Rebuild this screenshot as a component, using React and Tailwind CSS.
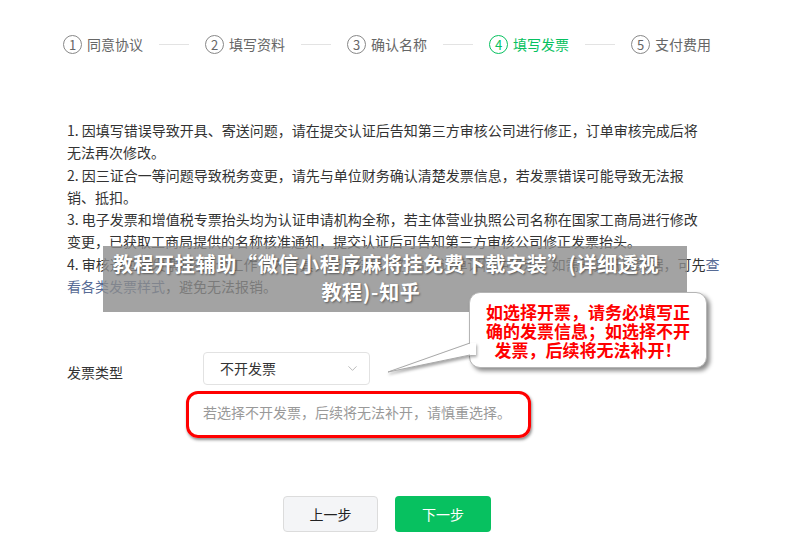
import React from "react";
import { ChevronDown } from "lucide-react";

const steps = [
  { n: 1, label: "同意协议" },
  { n: 2, label: "填写资料" },
  { n: 3, label: "确认名称" },
  { n: 4, label: "填写发票", active: true },
  { n: 5, label: "支付费用" },
];

function Steps() {
  return (
    <div className="flex h-[20px] items-center pl-[63px]">
      {steps.map((s, i) => (
        <React.Fragment key={s.n}>
          {i > 0 && <div className="mx-[16px] h-px w-[30px] bg-[#e3e3e3]" />}
          <div
            className={
              "flex items-center gap-[5px] " +
              (s.active ? "text-[#07c160]" : "text-[#666]")
            }
          >
            <div
              className={
                "flex h-[19px] w-[19px] items-center justify-center rounded-full border text-[13px] leading-none " +
                (s.active ? "border-[#07c160]" : "border-[#888]")
              }
            >
              {s.n}
            </div>
            <span className="text-[14px] leading-[20px]">{s.label}</span>
          </div>
        </React.Fragment>
      ))}
    </div>
  );
}

function Notes() {
  return (
    <div className="mt-[65px] pl-[67px] text-[14px] leading-[22.3px] text-[#333] whitespace-nowrap">
      <div>1. 因填写错误导致开具、寄送问题，请在提交认证后告知第三方审核公司进行修正，订单审核完成后将</div>
      <div>无法再次修改。</div>
      <div>2. 因三证合一等问题导致税务变更，请先与单位财务确认清楚发票信息，若发票错误可能导致无法报</div>
      <div>销、抵扣。</div>
      <div>3. 电子发票和增值税专票抬头均为认证申请机构全称，若主体营业执照公司名称在国家工商局进行修改</div>
      <div>变更，已获取工商局提供的名称核准通知，提交认证后可告知第三方审核公司修正发票抬头。</div>
      <div>
        4. 审核通过后发票将在8个工作日内开具，开票结果将在右侧订单详情中显示，如需开具纸质票据，可先
        <span className="text-[#576b95]">查</span>
      </div>
      <div>
        <span className="text-[#576b95]">看各类发票样式</span>，避免无法报销。
      </div>
    </div>
  );
}

function InvoiceForm() {
  return (
    <div className="pl-[67px]">
      <div className="mt-[55px] flex items-center">
        <div className="w-[136px] pt-[7px] text-[14px] leading-[20px] text-[#333]">发票类型</div>
        <div className="flex h-[33px] w-[167px] items-center justify-between rounded-[4px] border border-[#e2e2e2] pl-[16px] pr-[9px] text-[14px] text-[#333]">
          <span>不开发票</span>
          <ChevronDown size={15} strokeWidth={1.3} className="text-[#aaa]" />
        </div>
      </div>
      <div className="mt-[17px] pl-[136px] text-[14px] leading-[20px] text-[#999]">
        若选择不开发票，后续将无法补开，请慎重选择。
      </div>
      <div className="mt-[74px] flex gap-[17px] pl-[216px]">
        <button className="h-[36px] w-[95px] rounded-[4px] border border-[#dcdcdc] bg-[#f4f5f7] text-[14px] text-[#222]">
          上一步
        </button>
        <button className="h-[36px] w-[96px] rounded-[4px] bg-[#07c160] text-[14px] text-white">
          下一步
        </button>
      </div>
    </div>
  );
}

export default function App() {
  return (
    <div className="relative h-[560px] w-[793px] overflow-hidden bg-white font-['Noto_Sans_CJK_SC',sans-serif]">
      <div className="pt-[34px]">
        <Steps />
        <Notes />
        <InvoiceForm />
      </div>

      {/* title banner */}
      <div className="absolute left-[103px] top-[246px] h-[66px] w-[584px] bg-[rgba(140,140,140,0.8)] pt-[4px] text-[20px] font-bold leading-[28px] tracking-[0.7px] text-white [text-shadow:1px_1px_2px_rgba(0,0,0,0.45)]">
        <div className="whitespace-nowrap pr-[18px] text-center">教程开挂辅助“微信小程序麻将挂免费下载安装”(详细透视</div>
        <div className="whitespace-nowrap pr-[48px] text-center">教程)-知乎</div>
      </div>

      {/* red highlight around the hint */}
      <div className="absolute left-[186px] top-[391px] h-[47px] w-[345px] rounded-[12px] border-[3px] border-[#f00] shadow-[1px_2px_3px_rgba(0,0,0,0.45)]" />

      {/* callout bubble */}
      <div className="absolute left-[469px] top-[292px] flex h-[76px] w-[238px] flex-col items-center justify-center rounded-[11px] border border-[#b5b5b5] bg-white text-[17px] font-bold leading-[19px] text-[#f00] shadow-[3px_3px_4px_rgba(0,0,0,0.45)]">
        <div>如选择开票，请务必填写正</div>
        <div>确的发票信息；如选择不开</div>
        <div>发票，后续将无法补开！</div>
      </div>
      <svg
        className="absolute left-[380px] top-[335px]"
        width="96"
        height="45"
        viewBox="0 0 96 45"
        style={{ filter: "drop-shadow(1px 2px 1.5px rgba(0,0,0,0.35))" }}
      >
        <polygon points="8,37 91,8 96,8 96,20 91,20" fill="#fff" />
        <polyline points="90,8 8,37 90,20" fill="none" stroke="#a8a8a8" strokeWidth="1" />
      </svg>
    </div>
  );
}
